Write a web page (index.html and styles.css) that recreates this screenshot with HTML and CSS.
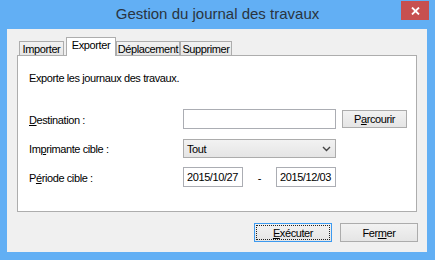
FILE: index.html
```html
<!DOCTYPE html>
<html lang="fr">
<head>
<meta charset="utf-8">
<title>Gestion du journal des travaux</title>
<link rel="stylesheet" href="styles.css">
</head>
<body>
<div class="window">
  <div class="titlebar">
    <span class="title">Gestion du journal des travaux</span>
    <div class="close">
      <svg width="9" height="8" viewBox="0 0 9 8"><path d="M1 0.5 L8 7.5 M8 0.5 L1 7.5" stroke="#fff" stroke-width="1.8"/></svg>
    </div>
  </div>
  <div class="client">
    <div class="tabs">
      <div class="tab tab-importer">Importer</div>
      <div class="tab tab-active">Exporter</div>
      <div class="tab tab-deplacement">Déplacement</div>
      <div class="tab tab-supprimer">Supprimer</div>
    </div>
    <div class="panel">
      <p class="desc">Exporte les journaux des travaux.</p>
      <div class="form">
        <label class="lbl"><u>D</u>estination :</label>
        <input class="field field-wide" type="text" value="">
        <button class="btn btn-browse">P<u>a</u>rcourir</button>

        <label class="lbl">Im<u>p</u>rimante cible :</label>
        <div class="select field-wide">
          <span>Tout</span>
          <svg width="9" height="6" viewBox="0 0 9 6"><path d="M1 1 L4.5 4.5 L8 1" fill="none" stroke="#444" stroke-width="1.4"/></svg>
        </div>
        <span></span>

        <label class="lbl">P<u>é</u>riode cible :</label>
        <div class="dates">
          <input class="field field-date" type="text" value="2015/10/27">
          <span class="dash">-</span>
          <input class="field field-date" type="text" value="2015/12/03">
        </div>
        <span></span>
      </div>
    </div>
    <div class="actions">
      <button class="btn btn-default"><u>E</u>xécuter</button>
      <button class="btn">Fer<u>m</u>er</button>
    </div>
  </div>
</div>
</body>
</html>
```
FILE: styles.css
```css
* { box-sizing: border-box; }
html, body { margin: 0; padding: 0; }
body {
  width: 435px;
  height: 260px;
  background: #62aff4;
  font-family: "Liberation Sans", Arial, sans-serif;
  overflow: hidden;
}
.window {
  width: 435px;
  height: 260px;
  display: flex;
  flex-direction: column;
}
.titlebar {
  position: relative;
  height: 29px;
  display: flex;
  justify-content: center;
  align-items: center;
}
.title {
  font-size: 15px;
  color: #2a3440;
  line-height: 28px;
  margin-top: -1px;
}
.close {
  position: absolute;
  top: 1px;
  right: 6px;
  width: 28px;
  height: 19px;
  background: #c75050;
  display: flex;
  align-items: center;
  justify-content: center;
}
.client {
  margin: 0 8px 8px 7px;
  height: 223px;
  background: #f0f0f0;
  display: flex;
  flex-direction: column;
  font-size: 11px;
  letter-spacing: -0.4px;
  color: #000;
}
.tabs {
  margin: 8px 0 0 12px;
  height: 18px;
  display: flex;
  align-items: flex-end;
  position: relative;
  z-index: 1;
}
.tab {
  height: 14px;
  border: 1px solid #adadad;
  border-bottom: none;
  background: linear-gradient(#f2f2f2, #e6e6e6);
  line-height: 14px;
  padding: 0;
  white-space: nowrap;
  text-align: center;
}
.tab-importer { width: 45px; margin-right: 2px; }
.tab-active {
  width: 50px;
  height: 19px;
  margin-bottom: -1px;
  background: #fff;
  line-height: 15px;
}
.tab-deplacement { width: 64px; }
.tab-supprimer { width: 52px; }
.panel {
  margin: 0 10px 0 10px;
  height: 157px;
  background: #fff;
  border: 1px solid #adadad;
  padding: 16px 11px 0 11px;
}
.desc {
  margin: 0;
  line-height: 13px;
}
.form {
  margin-top: 24px;
  display: grid;
  grid-template-columns: 154px 153px auto;
  grid-auto-rows: 20px;
  row-gap: 9px;
  align-items: center;
}
.lbl {
  line-height: 13px;
  padding-top: 3px;
}
.field {
  height: 20px;
  border: 1px solid #abadb3;
  background: #fff;
  font-family: "Liberation Sans", Arial, sans-serif;
  font-size: 11px;
  letter-spacing: -0.4px;
  color: #000;
  padding: 0 3px;
  margin: 0;
  outline: none;
}
.field-wide { width: 153px; }
.select {
  height: 19px;
  margin-top: 1px;
  border: 1px solid #acacac;
  background: linear-gradient(#f2f2f2, #e5e5e5);
  display: flex;
  align-items: center;
  justify-content: space-between;
  padding: 0 4px 0 3px;
}
.dates {
  display: flex;
  align-items: center;
}
.field-date { width: 60px; }
.dash {
  width: 33px;
  text-align: center;
  padding-top: 2px;
}
.btn {
  height: 18px;
  border: 1px solid #acacac;
  background: linear-gradient(#f2f2f2, #e5e5e5);
  font-family: "Liberation Sans", Arial, sans-serif;
  font-size: 11px;
  letter-spacing: -0.4px;
  color: #000;
  padding: 0;
  margin: 0;
}
.btn-browse {
  width: 65px;
  margin-left: 6px;
}
.actions {
  margin: 11px 9px 0 0;
  display: flex;
  justify-content: flex-end;
  gap: 8px;
}
.actions .btn {
  width: 78px;
  height: 19px;
}
.btn-default {
  border-color: #3c9af0;
  outline: 1px dotted #222;
  outline-offset: -3px;
}
```
